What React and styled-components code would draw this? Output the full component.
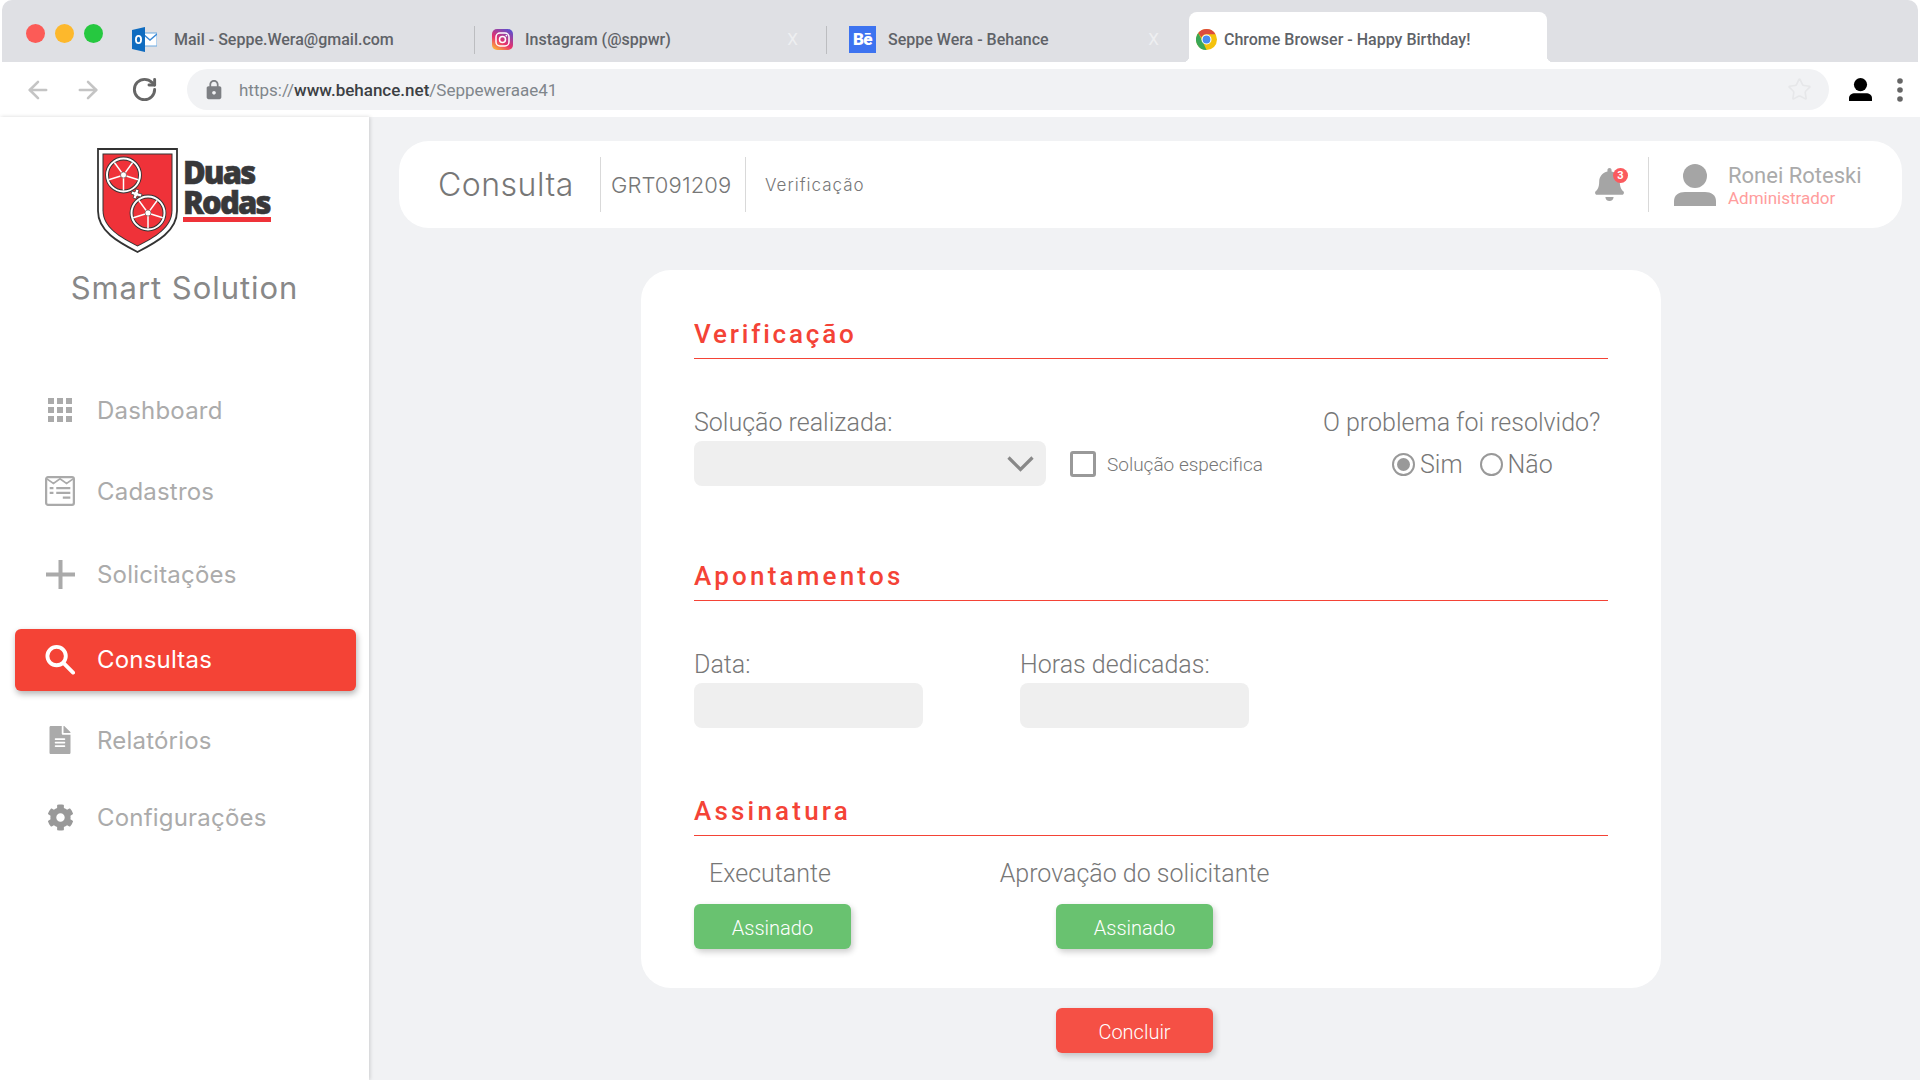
import React from "react";
import styled, { createGlobalStyle } from "styled-components";
import { ArrowLeft, ArrowRight, RotateCw, Star } from "lucide-react";
import { FaFileAlt, FaCog, FaBell } from "react-icons/fa";
import { MdLock } from "react-icons/md";

const GlobalStyle = createGlobalStyle`
  html, body {
    margin: 0;
    padding: 0;
    background: #fff;
    font-family: "Roboto", "Liberation Sans", sans-serif;
  }
  * {
    box-sizing: border-box;
  }
`;

const Page = styled.div`
  width: 1920px;
  height: 1080px;
  overflow: hidden;
  display: flex;
  flex-direction: column;
  background: #fff;
`;

/* browser chrome */
const TabStrip = styled.div`
  height: 62px;
  margin: 0 2px;
  display: flex;
  align-items: flex-end;
  background: #dfe0e4;
  border-radius: 10px 10px 0 0;
`;

const Lights = styled.div`
  display: flex;
  gap: 10px;
  padding: 0 0 19px 24px;
  width: 130px;
  align-self: flex-end;
`;

const Light = styled.span`
  width: 19px;
  height: 19px;
  border-radius: 50%;
  background: ${(p) => p.$color};
`;

const Tab = styled.div`
  height: 50px;
  width: ${(p) => p.$width}px;
  padding: 4px ${(p) => p.$right || 0}px 0 ${(p) => p.$left}px;
  display: flex;
  align-items: center;
  gap: ${(p) => p.$gap}px;
  position: relative;
  font-size: 16px;
  font-weight: 500;
  color: #5f6368;
  white-space: nowrap;
  background: ${(p) => (p.$active ? "#fff" : "transparent")};
  border-radius: ${(p) => (p.$active ? "8px 8px 0 0" : "0")};
`;

const TabCorner = styled.span`
  position: absolute;
  bottom: 0;
  ${(p) => (p.$side === "left" ? "left: -6px;" : "right: -6px;")}
  width: 6px;
  height: 6px;
  background: radial-gradient(
    circle at ${(p) => (p.$side === "left" ? "0 0" : "100% 0")},
    transparent 6px,
    #fff 6.5px
  );
`;

const TabClose = styled.span`
  margin-left: auto;
  color: #eeeff1;
  font-size: 17px;
  font-weight: 400;
`;

const TabSeparator = styled.span`
  width: 1px;
  height: 28px;
  margin-bottom: 8px;
  background: #bcbdc0;
`;

const Toolbar = styled.div`
  height: 55px;
  display: flex;
  align-items: center;
  background: #fff;
  flex-shrink: 0;
`;

const NavButtons = styled.div`
  width: 187px;
  padding-left: 24px;
  display: flex;
  align-items: center;
  gap: 22px;
`;

const Reload = styled.span`
  display: flex;
  margin-left: 7px;
`;

const AddressBar = styled.div`
  width: 1642px;
  height: 41px;
  padding: 0 10px 0 16px;
  display: flex;
  align-items: center;
  background: #f1f2f4;
  border-radius: 21px;
`;

const Url = styled.div`
  margin-left: 14px;
  font-size: 17px;
  color: #80868b;
  span {
    color: #3c4043;
    font-weight: 500;
  }
`;

const StarSlot = styled.span`
  margin-left: auto;
  margin-right: 7px;
  display: flex;
`;

const ToolbarIcons = styled.div`
  display: flex;
  align-items: center;
  margin-left: 20px;
  gap: 25px;
`;

/* page body */
const Body = styled.div`
  flex: 1;
  display: flex;
  background: #f1f2f4;
  min-height: 0;
`;

const Sidebar = styled.aside`
  width: 369px;
  flex-shrink: 0;
  padding: 31px 0 0 15px;
  background: #fff;
  box-shadow: 1px 0 4px rgba(0, 0, 0, 0.16);
`;

const LogoRow = styled.div`
  display: flex;
  gap: 5px;
  padding-left: 82px;
`;

const LogoWords = styled.div`
  display: flex;
  flex-direction: column;
  padding-top: 9px;
  color: #38383a;
  font-family: "Open Sans", sans-serif;
  font-weight: 800;
  font-size: 31px;
  line-height: 30px;
  letter-spacing: -1.9px;
  -webkit-text-stroke: 0.6px #38383a;
`;

const LogoRule = styled.span`
  width: 88px;
  height: 5px;
  background: #ef3239;
`;

const Brand = styled.div`
  width: 339px;
  margin-top: 17px;
  text-align: center;
  font-family: "Inter", sans-serif;
  font-size: 31px;
  line-height: 36px;
  letter-spacing: 0.95px;
  color: #888;
`;

const Nav = styled.nav`
  display: flex;
  flex-direction: column;
  margin-top: 74px;
`;

const NavItem = styled.a`
  width: 341px;
  height: 62px;
  margin-top: ${(p) => p.$top}px;
  padding: 0 0 2px 30px;
  display: flex;
  align-items: center;
  font-family: "Inter", sans-serif;
  font-size: 24px;
  letter-spacing: 0.2px;
  color: ${(p) => (p.$active ? "#fff" : "#ababab")};
  background: ${(p) => (p.$active ? "#f44336" : "transparent")};
  border-radius: 6px;
  box-shadow: ${(p) => (p.$active ? "1px 3px 6px rgba(0, 0, 0, 0.3)" : "none")};
`;

const NavIcon = styled.span`
  width: 30px;
  height: 32px;
  margin-right: 22px;
  display: flex;
  align-items: center;
  justify-content: center;
`;

const DotGrid = styled.span`
  display: grid;
  grid-template-columns: repeat(3, 6px);
  grid-auto-rows: 6px;
  gap: 3px;
  span {
    background: #aaa;
  }
`;

const Main = styled.main`
  flex: 1;
  padding: 24px 18px 0 30px;
`;

const HeaderCard = styled.header`
  height: 87px;
  padding-left: 39px;
  display: flex;
  align-items: center;
  background: #fff;
  border-radius: 30px;
`;

const HeaderTitle = styled.h1`
  margin: 0;
  width: 162px;
  font-family: "Inter", sans-serif;
  font-size: 32px;
  font-weight: 300;
  letter-spacing: 0.5px;
  color: #777;
`;

const HeaderRule = styled.span`
  width: 1px;
  height: 55px;
  background: #d9d9d9;
`;

const HeaderCode = styled.span`
  width: 144px;
  padding-left: 10px;
  font-family: "Inter", sans-serif;
  font-size: 22px;
  font-weight: 300;
  letter-spacing: 0.1px;
  color: #777;
`;

const HeaderStep = styled.span`
  padding-left: 19px;
  font-family: "Inter", sans-serif;
  font-size: 17px;
  font-weight: 300;
  letter-spacing: 1px;
  color: #777;
`;

const HeaderRight = styled.div`
  margin-left: auto;
  display: flex;
  align-items: center;
`;

const BellWrap = styled.span`
  position: relative;
  display: flex;
  margin-right: 22px;
`;

const Badge = styled.span`
  position: absolute;
  top: 0;
  right: -2px;
  width: 15px;
  height: 15px;
  display: flex;
  align-items: center;
  justify-content: center;
  font-size: 11px;
  font-weight: 700;
  color: #fff;
  background: #fb5a5e;
  border-radius: 50%;
`;

const UserBlock = styled.div`
  width: 253px;
  padding-left: 25px;
  display: flex;
  align-items: center;
  gap: 12px;
`;

const UserName = styled.div`
  font-size: 22px;
  line-height: 27px;
  color: #aaa;
`;

const UserRole = styled.div`
  font-size: 17px;
  line-height: 19px;
  color: #ff9d9d;
`;

const FormCard = styled.section`
  width: 1020px;
  margin: 42px 0 0 242px;
  padding: 48px 53px 39px 53px;
  background: #fff;
  border-radius: 30px;
`;

const SectionTitle = styled.h2`
  height: 41px;
  margin: ${(p) => p.$top || 0}px 0 0;
  font-size: 26px;
  line-height: 32px;
  font-weight: 500;
  letter-spacing: ${(p) => p.$spacing || 3.2}px;
  color: #f44336;
  border-bottom: 1px solid #f44336;
`;

const Row = styled.div`
  display: flex;
  align-items: flex-start;
  margin-top: ${(p) => p.$top}px;
  gap: ${(p) => p.$gap || 0}px;
`;

const Field = styled.div`
  width: ${(p) => p.$width}px;
  display: flex;
  flex-direction: column;
  gap: 3px;
`;

const Label = styled.label`
  display: block;
  height: 30px;
  padding-right: ${(p) => p.$inset || 0}px;
  font-size: 25px;
  line-height: 30px;
  font-weight: 300;
  color: #777;
  white-space: nowrap;
`;

const Input = styled.div`
  height: 45px;
  padding-right: 12px;
  display: flex;
  align-items: center;
  justify-content: flex-end;
  background: #efefef;
  border-radius: 8px;
`;

const CheckField = styled.div`
  margin: 43px 0 0 24px;
  height: 26px;
  display: flex;
  align-items: center;
  gap: 11px;
  font-size: 19px;
  font-weight: 300;
  color: #777;
  white-space: nowrap;
`;

const Checkbox = styled.span`
  width: 26px;
  height: 26px;
  border: 3px solid #999;
  border-radius: 3px;
`;

const Question = styled.div`
  margin-left: 60px;
  display: flex;
  flex-direction: column;
`;

const RadioRow = styled.div`
  height: 45px;
  margin-top: 4px;
  padding-left: 69px;
  display: flex;
  align-items: center;
  gap: 17px;
`;

const RadioOption = styled.span`
  display: flex;
  align-items: center;
  gap: 5px;
  font-size: 25px;
  font-weight: 300;
  color: #777;
`;

const Radio = styled.span`
  width: 23px;
  height: 23px;
  display: flex;
  align-items: center;
  justify-content: center;
  border: 2px solid #999;
  border-radius: 50%;
  &::after {
    content: "";
    width: 13px;
    height: 13px;
    border-radius: 50%;
    background: ${(p) => (p.$checked ? "#999" : "transparent")};
  }
`;

const SignColumn = styled.div`
  width: 157px;
  margin-left: ${(p) => p.$left || 0}px;
  display: flex;
  flex-direction: column;
  align-items: center;
  gap: 15px;
`;

const ActionButton = styled.button`
  width: 157px;
  height: 45px;
  padding: 3px 0 0;
  border: 0;
  border-radius: 6px;
  font-family: "Roboto", sans-serif;
  font-size: 20px;
  font-weight: 300;
  color: #fff;
  background: ${(p) => p.$color};
  box-shadow: 2px 3px 6px rgba(0, 0, 0, 0.2);
`;

const Footer = styled.div`
  margin: 20px 0 0 657px;
`;

const OutlookIcon = () => (
  <svg width="25" height="25" viewBox="0 0 25 25">
    <rect x="11" y="6" width="14" height="13" fill="#fff" stroke="#6aa9e0" />
    <path d="M11 7l7 6 7-6" fill="none" stroke="#3c8ad6" strokeWidth="1.4" />
    <path d="M0 3L13 0v25L0 22z" fill="#0f6cc0" />
    <ellipse cx="6.5" cy="12.5" rx="2.6" ry="3.6" fill="none" stroke="#fff" strokeWidth="1.8" />
  </svg>
);

const InstagramIcon = () => (
  <svg width="21" height="21" viewBox="0 0 21 21">
    <defs>
      <linearGradient id="ig" x1="0.2" y1="1" x2="0.8" y2="0">
        <stop offset="0" stopColor="#fdb03a" />
        <stop offset="0.4" stopColor="#e8316b" />
        <stop offset="1" stopColor="#5b4fd0" />
      </linearGradient>
    </defs>
    <rect width="21" height="21" rx="5" fill="url(#ig)" />
    <rect x="4" y="4" width="13" height="13" rx="4" fill="none" stroke="#fff" strokeWidth="1.5" />
    <circle cx="10.5" cy="10.5" r="3" fill="none" stroke="#fff" strokeWidth="1.5" />
    <circle cx="14.4" cy="6.6" r="0.9" fill="#fff" />
  </svg>
);

const BehanceTile = styled.span`
  width: 27px;
  height: 27px;
  display: flex;
  align-items: center;
  justify-content: center;
  background: #3d73f0;
  color: #fff;
  font-size: 17px;
  font-weight: 900;
  letter-spacing: -0.5px;
`;

const ChromeIcon = () => (
  <svg width="21" height="21" viewBox="0 0 21 21">
    <circle cx="10.5" cy="10.5" r="10.5" fill="#f4c20d" />
    <path d="M10.5 0a10.5 10.5 0 0 1 9.1 5.25H10.5a5.25 5.25 0 0 0-4.9 3.3L2.2 4.1A10.5 10.5 0 0 1 10.5 0z" fill="#dd4b3e" />
    <path d="M2.2 4.1l4.6 8.6 3.7 8.3A10.5 10.5 0 0 1 2.2 4.1z" fill="#3aa757" />
    <circle cx="10.5" cy="10.5" r="5" fill="#fff" />
    <circle cx="10.5" cy="10.5" r="3.9" fill="#4a8bf0" />
  </svg>
);

const PersonIcon = ({ size = 24, height, color = "#000" }) => (
  <svg width={size} height={height || size} viewBox="0 0 42 42">
    <circle cx="21" cy="12" r="12" fill={color} />
    <path d="M0 42v-5c0-6 5-9 11-9h20c6 0 11 3 11 9v5z" fill={color} />
  </svg>
);

const MenuDots = () => (
  <svg width="6" height="24" viewBox="0 0 6 24">
    <circle cx="3" cy="3" r="2.8" fill="#666" />
    <circle cx="3" cy="12" r="2.8" fill="#666" />
    <circle cx="3" cy="21" r="2.8" fill="#666" />
  </svg>
);

const SelectArrow = () => (
  <svg width="27" height="16" viewBox="0 0 27 16" fill="none">
    <path d="M1.500 1.500L13.500 13.500L25.500 1.500" stroke="#888" strokeWidth="3.200" />
  </svg>
);

const Wheel = ({ cx, cy }) => (
  <g fill="none" stroke="#fff">
    <circle cx={cx} cy={cy} r="16.500" stroke="#333" strokeWidth="3.800" />
    <circle cx={cx} cy={cy} r="16.500" strokeWidth="2" />
    {[36, 108, 180, 252, 324].map((a) => (
      <line
        key={a}
        x1={cx}
        y1={cy - 3}
        x2={cx}
        y2={cy - 15.5}
        strokeWidth="1.500"
        transform={`rotate(${a} ${cx} ${cy})`}
      />
    ))}
    <circle cx={cx} cy={cy} r="3" fill="#fff" stroke="#333" strokeWidth="0.5" />
  </g>
);

const Shield = () => (
  <svg width="81" height="105" viewBox="0 0 81 105">
    <path d="M1 1h79v62c0 20-20 31-39.500 41C21 94 1 83 1 63z" fill="#fff" stroke="#333" strokeWidth="1.800" />
    <path d="M5.500 5.500h70v57c0 17-17 27-35 36-18-9-35-19-35-36z" fill="#333" />
    <path d="M6.500 6.500h68v56c0 16-16 26-34 35-18-9-34-19-34-35z" fill="#ef3239" />
    <Wheel cx={26.5} cy={27} />
    <Wheel cx={51} cy={65} />
    <path d="M35 43l3 1 1-3 3 1-1 3 4 1-1 3-4-1-1 3-3-1 1-3-3-1z" fill="#fff" stroke="#333" strokeWidth="0.700" />
  </svg>
);

const CadastrosIcon = () => (
  <svg width="32" height="32" viewBox="0 0 32 32" fill="none" stroke="#aaa">
    <rect x="1.200" y="1.200" width="29.600" height="29.600" rx="2" strokeWidth="2.400" />
    <path d="M2 3l7 5 7-5 7 5 7-5" strokeWidth="1.800" />
    <path d="M5 13h4M12 13h15M5 18h4M12 18h15M19 23h8" strokeWidth="2.400" />
  </svg>
);

const PlusIcon = () => (
  <svg width="29" height="29" viewBox="0 0 29 29">
    <path d="M12.500 0h4v12.500H29v4H16.500V29h-4V16.500H0v-4h12.500z" fill="#aaa" />
  </svg>
);

const SearchIcon = () => (
  <svg width="31" height="31" viewBox="0 0 31 31" fill="none" stroke="#fff" strokeLinecap="round">
    <circle cx="12" cy="12" r="9.500" strokeWidth="4" />
    <path d="M19.500 19.500L29 29" strokeWidth="4" />
  </svg>
);

const menu = [
  { label: "Dashboard", top: 0, icon: <DotGrid>{Array.from({ length: 9 }, (_, i) => <span key={i} />)}</DotGrid> },
  { label: "Cadastros", top: 19, icon: <CadastrosIcon /> },
  { label: "Solicitações", top: 21, icon: <PlusIcon /> },
  { label: "Consultas", top: 23, icon: <SearchIcon />, active: true },
  { label: "Relatórios", top: 19, icon: <FaFileAlt size={28} color="#aaa" /> },
  { label: "Configurações", top: 15, icon: <FaCog size={27} color="#999" /> },
];

export default function App() {
  return (
    <Page>
      <GlobalStyle />
      <TabStrip>
        <Lights>
          <Light $color="#fc5b57" />
          <Light $color="#fdb82c" />
          <Light $color="#26c840" />
        </Lights>
        <Tab $width={342} $left={0} $gap={17}>
          <OutlookIcon />
          Mail - Seppe.Wera@gmail.com
        </Tab>
        <TabSeparator />
        <Tab $width={351} $left={17} $right={28} $gap={12}>
          <InstagramIcon />
          Instagram (@sppwr)
          <TabClose>X</TabClose>
        </Tab>
        <TabSeparator />
        <Tab $width={362} $left={22} $right={30} $gap={12}>
          <BehanceTile>Bē</BehanceTile>
          Seppe Wera - Behance
          <TabClose>X</TabClose>
        </Tab>
        <Tab $width={358} $left={7} $gap={7} $active>
          <TabCorner $side="left" />
          <ChromeIcon />
          Chrome Browser - Happy Birthday!
          <TabCorner $side="right" />
        </Tab>
      </TabStrip>
      <Toolbar>
        <NavButtons>
          <ArrowLeft size={28} color="#c4c4c4" strokeWidth={2.2} />
          <ArrowRight size={28} color="#c4c4c4" strokeWidth={2.2} />
          <Reload>
            <RotateCw size={27} color="#666" strokeWidth={2.6} />
          </Reload>
        </NavButtons>
        <AddressBar>
          <MdLock size={22} color="#7d7f83" />
          <Url>
            https://<span>www.behance.net</span>/Seppeweraae41
          </Url>
          <StarSlot>
            <Star size={25} color="#e6e7e9" strokeWidth={1.6} />
          </StarSlot>
        </AddressBar>
        <ToolbarIcons>
          <PersonIcon size={23} height={25} />
          <MenuDots />
        </ToolbarIcons>
      </Toolbar>
      <Body>
        <Sidebar>
          <LogoRow>
            <Shield />
            <LogoWords>
              <span>Duas</span>
              <span>Rodas</span>
              <LogoRule />
            </LogoWords>
          </LogoRow>
          <Brand>Smart Solution</Brand>
          <Nav>
            {menu.map((item) => (
              <NavItem key={item.label} $top={item.top} $active={item.active}>
                <NavIcon>{item.icon}</NavIcon>
                {item.label}
              </NavItem>
            ))}
          </Nav>
        </Sidebar>
        <Main>
          <HeaderCard>
            <HeaderTitle>Consulta</HeaderTitle>
            <HeaderRule />
            <HeaderCode>GRT091209</HeaderCode>
            <HeaderRule />
            <HeaderStep>Verificação</HeaderStep>
            <HeaderRight>
              <BellWrap>
                <FaBell size={33} color="#a5a5a5" />
                <Badge>3</Badge>
              </BellWrap>
              <HeaderRule />
              <UserBlock>
                <PersonIcon size={42} color="#a5a5a5" />
                <div>
                  <UserName>Ronei Roteski</UserName>
                  <UserRole>Administrador</UserRole>
                </div>
              </UserBlock>
            </HeaderRight>
          </HeaderCard>
          <FormCard>
            <SectionTitle $spacing={2.8}>Verificação</SectionTitle>
            <Row $top={49}>
              <Field $width={352}>
                <Label>Solução realizada:</Label>
                <Input>
                  <SelectArrow />
                </Input>
              </Field>
              <CheckField>
                <Checkbox />
                Solução especifica
              </CheckField>
              <Question>
                <Label>O problema foi resolvido?</Label>
                <RadioRow>
                  <RadioOption>
                    <Radio $checked />
                    Sim
                  </RadioOption>
                  <RadioOption>
                    <Radio />
                    Não
                  </RadioOption>
                </RadioRow>
              </Question>
            </Row>
            <SectionTitle $top={73}>Apontamentos</SectionTitle>
            <Row $top={49} $gap={97}>
              <Field $width={229}>
                <Label>Data:</Label>
                <Input />
              </Field>
              <Field $width={229}>
                <Label>Horas dedicadas:</Label>
                <Input />
              </Field>
            </Row>
            <SectionTitle $top={67}>Assinatura</SectionTitle>
            <Row $top={23}>
              <SignColumn>
                <Label $inset={5}>Executante</Label>
                <ActionButton $color="#69c270">Assinado</ActionButton>
              </SignColumn>
              <SignColumn $left={205}>
                <Label>Aprovação do solicitante</Label>
                <ActionButton $color="#69c270">Assinado</ActionButton>
              </SignColumn>
            </Row>
          </FormCard>
          <Footer>
            <ActionButton $color="#f55045">Concluir</ActionButton>
          </Footer>
        </Main>
      </Body>
    </Page>
  );
}
